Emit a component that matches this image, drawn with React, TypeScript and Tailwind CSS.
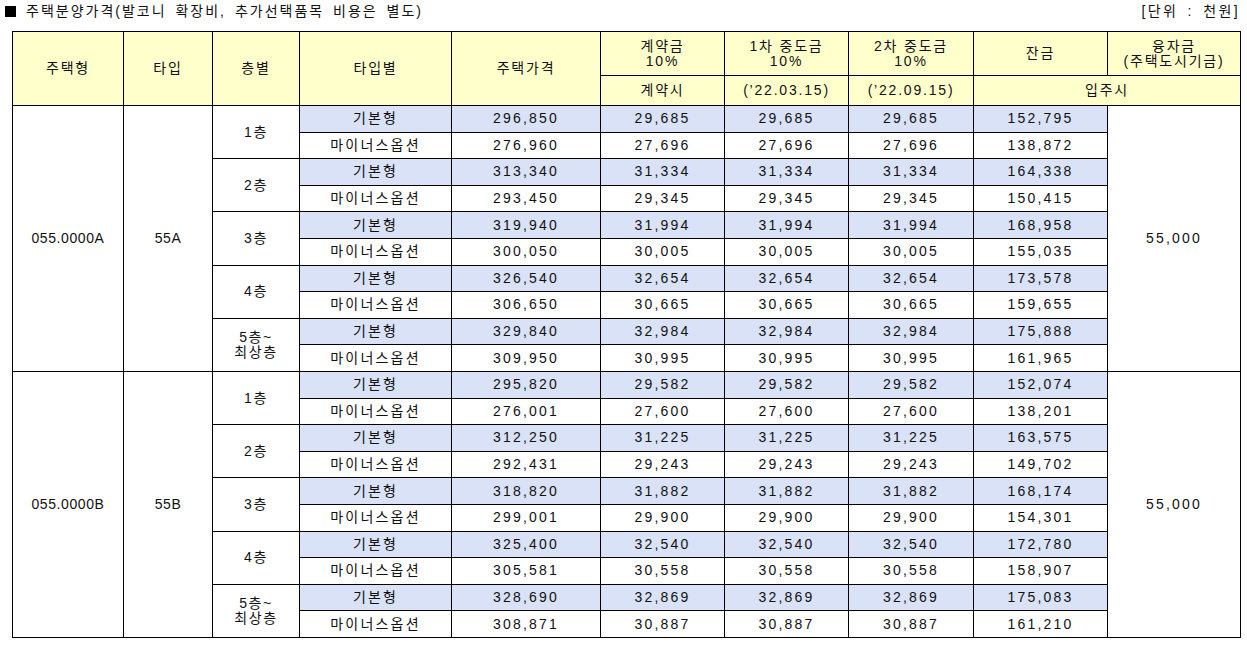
import React from "react";

type Row = {
  kind: "기본형" | "마이너스옵션";
  price: string;
  down: string;
  mid1: string;
  mid2: string;
  rest: string;
};

type Floor = { label: string[]; rows: [Row, Row] };

type Group = { code: string; type: string; loan: string; floors: Floor[] };

function r(kind: Row["kind"], price: string, part: string, rest: string): Row {
  return { kind, price, down: part, mid1: part, mid2: part, rest };
}

const groups: Group[] = [
  {
    code: "055.0000A",
    type: "55A",
    loan: "55,000",
    floors: [
      { label: ["1층"], rows: [r("기본형", "296,850", "29,685", "152,795"), r("마이너스옵션", "276,960", "27,696", "138,872")] },
      { label: ["2층"], rows: [r("기본형", "313,340", "31,334", "164,338"), r("마이너스옵션", "293,450", "29,345", "150,415")] },
      { label: ["3층"], rows: [r("기본형", "319,940", "31,994", "168,958"), r("마이너스옵션", "300,050", "30,005", "155,035")] },
      { label: ["4층"], rows: [r("기본형", "326,540", "32,654", "173,578"), r("마이너스옵션", "306,650", "30,665", "159,655")] },
      { label: ["5층~", "최상층"], rows: [r("기본형", "329,840", "32,984", "175,888"), r("마이너스옵션", "309,950", "30,995", "161,965")] },
    ],
  },
  {
    code: "055.0000B",
    type: "55B",
    loan: "55,000",
    floors: [
      { label: ["1층"], rows: [r("기본형", "295,820", "29,582", "152,074"), r("마이너스옵션", "276,001", "27,600", "138,201")] },
      { label: ["2층"], rows: [r("기본형", "312,250", "31,225", "163,575"), r("마이너스옵션", "292,431", "29,243", "149,702")] },
      { label: ["3층"], rows: [r("기본형", "318,820", "31,882", "168,174"), r("마이너스옵션", "299,001", "29,900", "154,301")] },
      { label: ["4층"], rows: [r("기본형", "325,400", "32,540", "172,780"), r("마이너스옵션", "305,581", "30,558", "158,907")] },
      { label: ["5층~", "최상층"], rows: [r("기본형", "328,690", "32,869", "175,083"), r("마이너스옵션", "308,871", "30,887", "161,210")] },
    ],
  },
];

const font = "font-['Liberation_Sans','Noto_Sans_CJK_KR',sans-serif]";
const cell = "border border-black text-center align-middle p-0 leading-[15px]";
const head = `${cell} bg-[#ffffcc] tracking-[1.8px] font-normal`;
const num = `${cell} tracking-[2.2px]`;

export default function App() {
  return (
    <div className={`${font} w-[1247px] h-[647px] bg-white text-[14px] text-[#111]`}>
      <div className="flex h-[31px] items-start justify-between pl-[5px] pr-[7px] pt-[1px]">
        <p className="flex items-center">
          <span className="inline-block size-[11px] bg-black" />
          <span className="ml-[10px] tracking-[2px] [word-spacing:3px]">
            주택분양가격(발코니 확장비, 추가선택품목 비용은 별도)
          </span>
        </p>
        <p className="tracking-[2.4px] [word-spacing:3px]">[단위 : 천원]</p>
      </div>
      <table className="ml-[12px] w-[1228px] table-fixed border-collapse">
        <colgroup>
          <col className="w-[111px]" />
          <col className="w-[89px]" />
          <col className="w-[87px]" />
          <col className="w-[152px]" />
          <col className="w-[149px]" />
          <col className="w-[124px]" />
          <col className="w-[124px]" />
          <col className="w-[125px]" />
          <col className="w-[134px]" />
          <col className="w-[133px]" />
        </colgroup>
        <thead>
          <tr className="h-[44px]">
            <th rowSpan={2} className={head}>주택형</th>
            <th rowSpan={2} className={head}>타입</th>
            <th rowSpan={2} className={head}>층별</th>
            <th rowSpan={2} className={head}>타입별</th>
            <th rowSpan={2} className={head}>주택가격</th>
            <th className={head}>계약금<br />10%</th>
            <th className={head}>1차 중도금<br />10%</th>
            <th className={head}>2차 중도금<br />10%</th>
            <th className={head}>잔금</th>
            <th className={head}>융자금<br />(주택도시기금)</th>
          </tr>
          <tr className="h-[30px]">
            <th className={head}>계약시</th>
            <th className={`${head} tracking-[0.8px]`}>(’22.03.15)</th>
            <th className={`${head} tracking-[0.8px]`}>(’22.09.15)</th>
            <th colSpan={2} className={head}>입주시</th>
          </tr>
        </thead>
        <tbody>
          {groups.map((g) =>
            g.floors.map((f, fi) =>
              f.rows.map((row, ri) => {
                const blue = row.kind === "기본형" ? "bg-[#d9e2f6]" : "";
                return (
                  <tr key={`${g.code}-${fi}-${ri}`} className="h-[26.6px]">
                    {fi === 0 && ri === 0 && (
                      <>
                        <td rowSpan={10} className={`${cell} tracking-[0.6px]`}>{g.code}</td>
                        <td rowSpan={10} className={`${cell} tracking-[0.6px]`}>{g.type}</td>
                      </>
                    )}
                    {ri === 0 && (
                      <td rowSpan={2} className={`${cell} tracking-[1.6px]`}>
                        {f.label.map((l) => (
                          <div key={l}>{l}</div>
                        ))}
                      </td>
                    )}
                    <td className={`${cell} ${blue} tracking-[2.2px]`}>{row.kind}</td>
                    <td className={`${num} ${blue}`}>{row.price}</td>
                    <td className={`${num} ${blue}`}>{row.down}</td>
                    <td className={`${num} ${blue}`}>{row.mid1}</td>
                    <td className={`${num} ${blue}`}>{row.mid2}</td>
                    <td className={`${num} ${blue}`}>{row.rest}</td>
                    {fi === 0 && ri === 0 && (
                      <td rowSpan={10} className={num}>{g.loan}</td>
                    )}
                  </tr>
                );
              }),
            ),
          )}
        </tbody>
      </table>
    </div>
  );
}
